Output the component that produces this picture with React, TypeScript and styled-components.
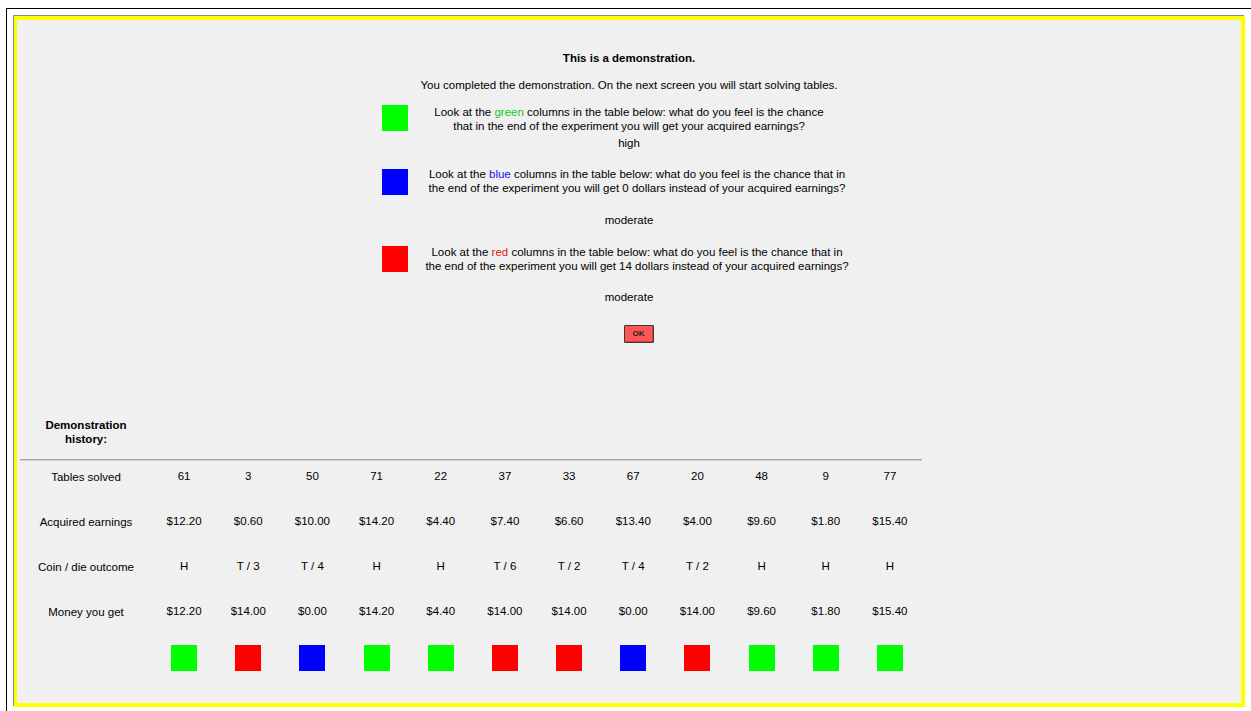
import React from 'react'
import styled, { createGlobalStyle } from 'styled-components'

const GlobalStyle = createGlobalStyle`
  html, body {
    margin: 0;
    padding: 0;
    background: #ffffff;
    overflow: hidden;
  }
  body {
    font-family: "Liberation Sans", Arial, sans-serif;
    font-size: 11.5px;
    line-height: 14px;
    color: #000000;
  }
`

const Desk = styled.div`
  margin: 8px 0 0 6px;
  height: 703px;
  border-top: 1px solid #000000;
  border-left: 1px solid #000000;
  box-sizing: border-box;
`

const Frame = styled.div`
  margin: 7px 0 0 7px;
  width: 1231px;
  height: 691px;
  box-sizing: border-box;
  border: 4px solid #ffff00;
  border-left-width: 3px;
  box-shadow: -1px -1px 0 #8c8c8c;
  background: #f0f0f0;
  display: flex;
  flex-direction: column;
`

const Intro = styled.div`
  display: flex;
  flex-direction: column;
  align-items: center;
  padding-top: 31px;
`

const Title = styled.div`
  font-weight: bold;
`

const Lead = styled.div`
  margin-top: 13px;
`

const QuestionRow = styled.div<{ $top: number }>`
  margin-top: ${(p) => p.$top}px;
  width: 494px;
  display: flex;
  align-items: flex-start;
`

const Swatch = styled.div<{ $color: string; $offset?: number }>`
  width: 26px;
  height: 26px;
  flex: none;
  margin-top: ${(p) => p.$offset || 0}px;
  background: ${(p) => p.$color};
`

const QuestionText = styled.div<{ $pad: number }>`
  flex: 1;
  text-align: center;
  padding-right: ${(p) => p.$pad}px;
`

const Word = styled.span<{ $color: string }>`
  color: ${(p) => p.$color};
`

const Answer = styled.div<{ $top: number }>`
  margin-top: ${(p) => p.$top}px;
`

const OkButton = styled.button`
  margin: 21px 0 0 19px;
  width: 30px;
  height: 18px;
  padding: 0;
  border: 1px solid #3a3a3a;
  border-radius: 1px;
  background: #ff5555;
  box-shadow: inset -1px -1px 0 #c84040;
  font-family: "Liberation Sans", Arial, sans-serif;
  font-size: 8px;
  font-weight: bold;
  color: #202020;
  line-height: 14px;
`

const History = styled.div`
  margin: 75px 0 0 3px;
  width: 902px;
`

const HistoryTitle = styled.div`
  width: 132px;
  text-align: center;
  font-weight: bold;
`

const Rule = styled.div`
  margin-top: 13px;
  height: 0;
  border-top: 1px solid #a6a6a6;
  border-bottom: 1px solid #d0d0d0;
`

const HistoryRow = styled.div<{ $pad?: number }>`
  display: grid;
  grid-template-columns: 132px repeat(12, 1fr);
  height: 45px;
  box-sizing: border-box;
  padding-top: ${(p) => (p.$pad === undefined ? 8 : p.$pad)}px;
`

const Cell = styled.div`
  display: flex;
  justify-content: center;
  text-align: center;
`

const LabelCell = styled(Cell)`
  padding-top: 1px;
`

const GREEN = '#00ff00'
const RED = '#ff0000'
const BLUE = '#0000ff'

const rounds = [
  { solved: '61', earned: '$12.20', outcome: 'H', paid: '$12.20', color: GREEN },
  { solved: '3', earned: '$0.60', outcome: 'T / 3', paid: '$14.00', color: RED },
  { solved: '50', earned: '$10.00', outcome: 'T / 4', paid: '$0.00', color: BLUE },
  { solved: '71', earned: '$14.20', outcome: 'H', paid: '$14.20', color: GREEN },
  { solved: '22', earned: '$4.40', outcome: 'H', paid: '$4.40', color: GREEN },
  { solved: '37', earned: '$7.40', outcome: 'T / 6', paid: '$14.00', color: RED },
  { solved: '33', earned: '$6.60', outcome: 'T / 2', paid: '$14.00', color: RED },
  { solved: '67', earned: '$13.40', outcome: 'T / 4', paid: '$0.00', color: BLUE },
  { solved: '20', earned: '$4.00', outcome: 'T / 2', paid: '$14.00', color: RED },
  { solved: '48', earned: '$9.60', outcome: 'H', paid: '$9.60', color: GREEN },
  { solved: '9', earned: '$1.80', outcome: 'H', paid: '$1.80', color: GREEN },
  { solved: '77', earned: '$15.40', outcome: 'H', paid: '$15.40', color: GREEN },
]

type Field = 'solved' | 'earned' | 'outcome' | 'paid'

const rows: { label: string; field: Field }[] = [
  { label: 'Tables solved', field: 'solved' },
  { label: 'Acquired earnings', field: 'earned' },
  { label: 'Coin / die outcome', field: 'outcome' },
  { label: 'Money you get', field: 'paid' },
]

const App = () => {
  return (
    <>
      <GlobalStyle />
      <Desk>
        <Frame>
          <Intro>
            <Title>This is a demonstration.</Title>
            <Lead>You completed the demonstration. On the next screen you will start solving tables.</Lead>

            <QuestionRow $top={13}>
              <Swatch $color={GREEN} />
              <QuestionText $pad={26}>
                Look at the <Word $color="#14c814">green</Word> columns in the table below: what do you feel is the chance
                <br />
                that in the end of the experiment you will get your acquired earnings?
              </QuestionText>
            </QuestionRow>
            <Answer $top={3}>high</Answer>

            <QuestionRow $top={17}>
              <Swatch $color={BLUE} $offset={2} />
              <QuestionText $pad={10}>
                Look at the <Word $color="#1414e6">blue</Word> columns in the table below: what do you feel is the chance that in
                <br />
                the end of the experiment you will get 0 dollars instead of your acquired earnings?
              </QuestionText>
            </QuestionRow>
            <Answer $top={18}>moderate</Answer>

            <QuestionRow $top={18}>
              <Swatch $color={RED} $offset={1} />
              <QuestionText $pad={10}>
                Look at the <Word $color="#e61414">red</Word> columns in the table below: what do you feel is the chance that in
                <br />
                the end of the experiment you will get 14 dollars instead of your acquired earnings?
              </QuestionText>
            </QuestionRow>
            <Answer $top={17}>moderate</Answer>

            <OkButton>OK</OkButton>
          </Intro>

          <History>
            <HistoryTitle>
              Demonstration
              <br />
              history:
            </HistoryTitle>
            <Rule />
            {rows.map((row) => (
              <HistoryRow key={row.field}>
                <LabelCell>{row.label}</LabelCell>
                {rounds.map((r, i) => (
                  <Cell key={i}>{r[row.field]}</Cell>
                ))}
              </HistoryRow>
            ))}
            <HistoryRow $pad={4}>
              <Cell />
              {rounds.map((r, i) => (
                <Cell key={i}>
                  <Swatch $color={r.color} />
                </Cell>
              ))}
            </HistoryRow>
          </History>
        </Frame>
      </Desk>
    </>
  )
}

export default App
